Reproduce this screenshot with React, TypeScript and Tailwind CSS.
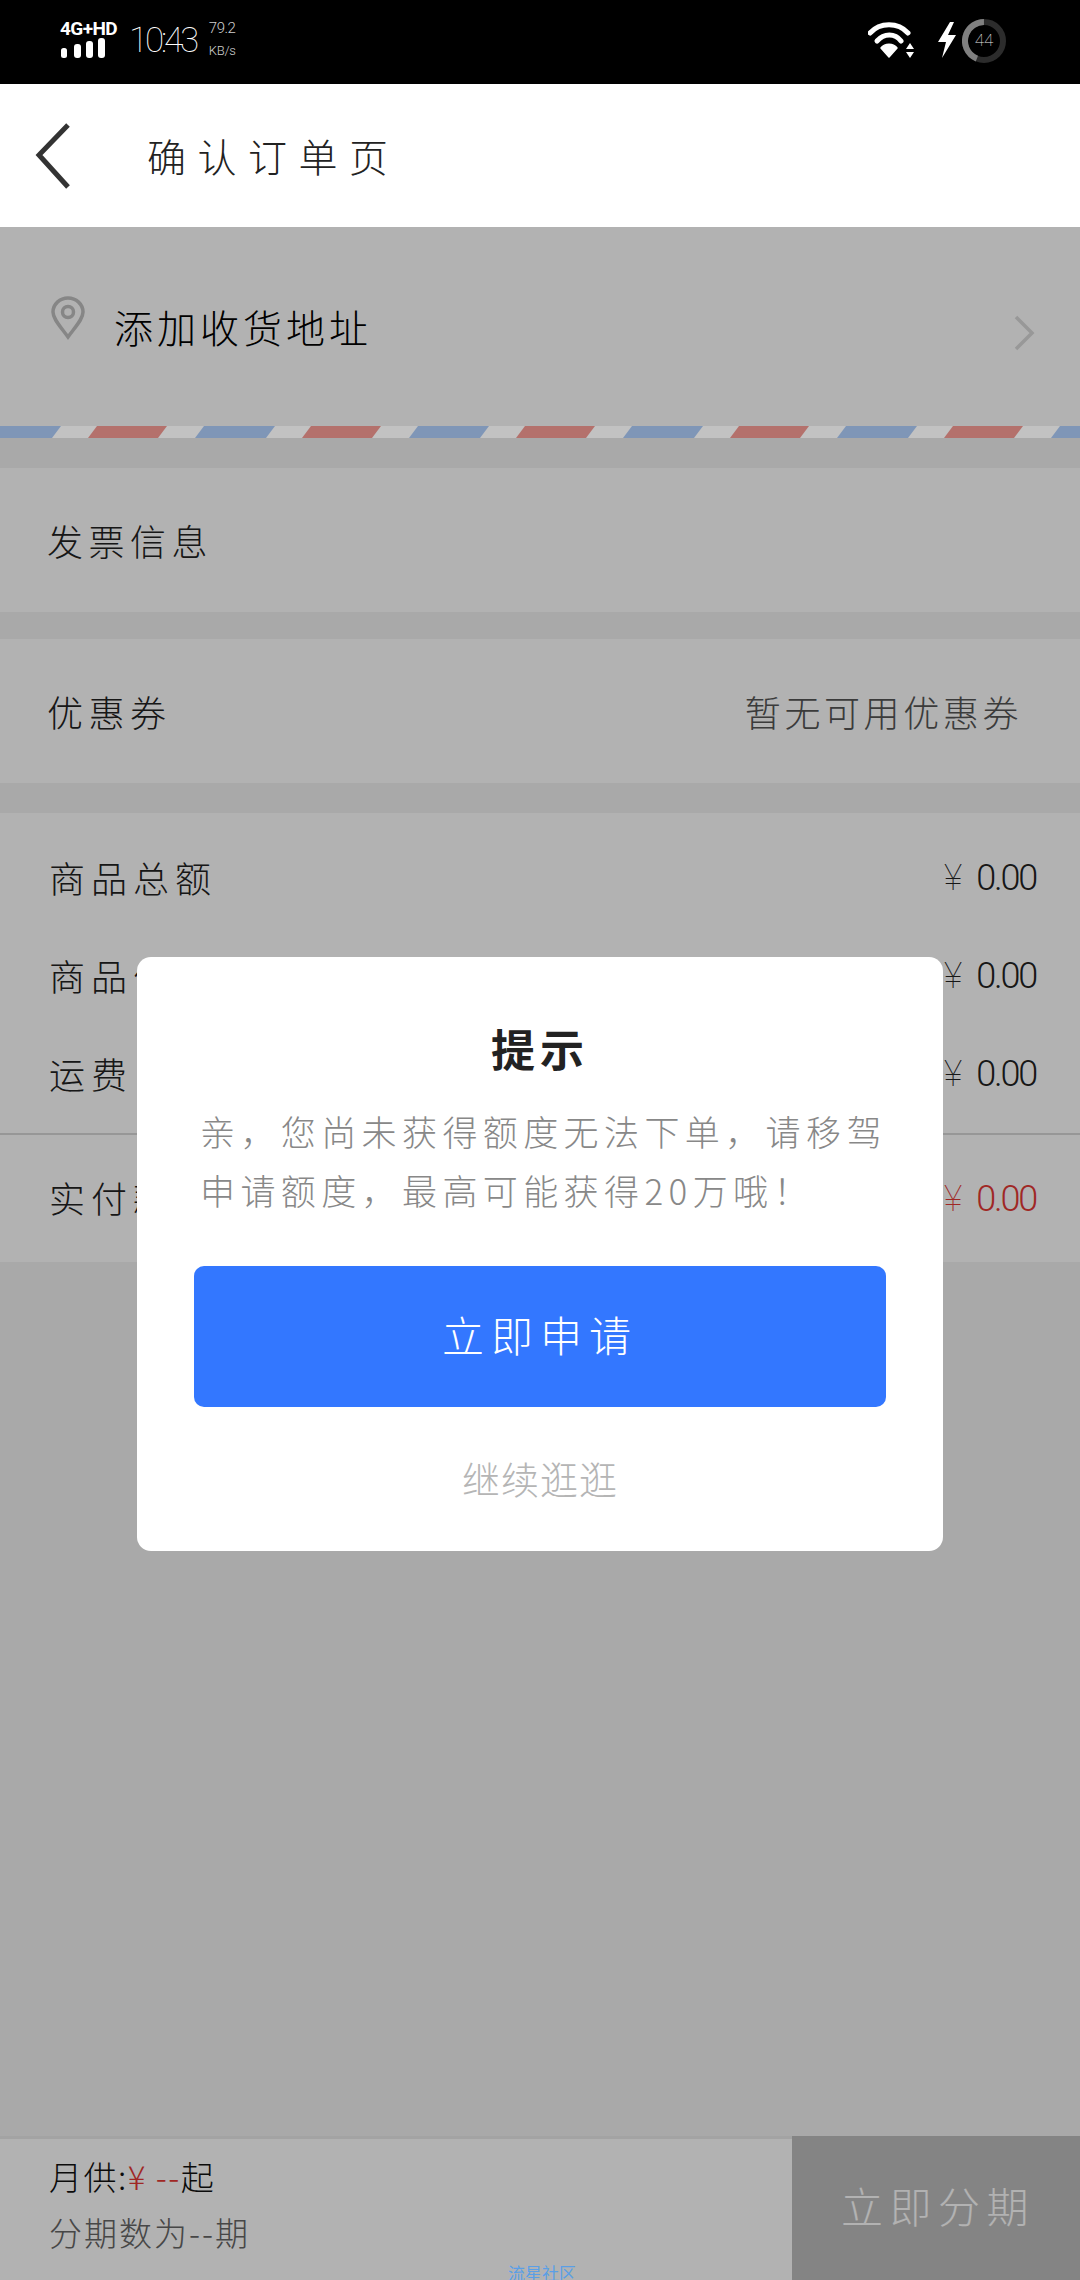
import React from "react";

const hand = "font-['Noto_Sans_CJK_SC','Noto_Sans',sans-serif]";
const num = "font-['Roboto','Noto_Sans_CJK_SC',sans-serif]";

function StatusBar() {
  return (
    <div className={`h-[84px] bg-black text-white flex items-start ${num}`}>
      <div className="w-[60px] shrink-0" />
      <div className="w-[60px] mt-[18px] flex flex-col">
        <span className="text-[19px] leading-[22px] font-bold tracking-[-0.6px] whitespace-nowrap">4G+HD</span>
        <svg width="46" height="21" viewBox="0 0 46 21" className="-mt-[3px] block" fill="#fff">
          <rect x="1" y="11" width="6" height="10" rx="2.5" />
          <rect x="14" y="7" width="7" height="14" rx="3" />
          <rect x="26" y="4" width="7" height="17" rx="3" />
          <rect x="38" y="1" width="7" height="20" rx="3" />
        </svg>
      </div>
      <span className="ml-[9px] mt-[19px] text-[35px] leading-[44px] font-thin tracking-[-3.2px]">10:43</span>
      <div className="ml-[13px] mt-[17px] flex flex-col text-[#cfcfcf] font-light">
        <span className="text-[15px] leading-[22px] tracking-[-0.5px]">79.2</span>
        <span className="text-[13px] leading-[20px] mt-[2px] tracking-[-0.3px]">KB/s</span>
      </div>
      <div className="ml-auto mr-[74px] mt-[19px] flex items-start">
        <svg width="48" height="42" viewBox="0 0 48 42" fill="none" stroke="#fff" strokeWidth="5" strokeLinecap="round">
          <path d="M2 14 C12 3 30 3 40 14" />
          <path d="M9 22 C16 14 27 14 33 22" />
          <path d="M21 38 L13 29 C17 24 25 24 29 29 Z" fill="#fff" strokeWidth="1.5" strokeLinejoin="round" />
          <path d="M42 24 L46 30 H38 Z M38 33 H46 L42 39 Z" fill="#fff" stroke="none" />
        </svg>
        <svg width="20" height="36" viewBox="0 0 20 36" fill="#fff" className="ml-[21px] mt-[3px]">
          <path d="M13 0 L1 20 H9 L5 36 L19 13 H11 L17 0 Z" />
        </svg>
        <div className="relative w-[44px] h-[44px] ml-[5px]">
          <svg width="44" height="44" viewBox="0 0 44 44" fill="none" strokeWidth="6">
            <circle cx="22" cy="22" r="19" stroke="#2c2c2c" />
            <circle cx="22" cy="22" r="19" stroke="#808080" strokeDasharray="52 120" transform="rotate(-248 22 22)" />
          </svg>
          <span className="absolute inset-0 flex items-center justify-center text-[17px] font-thin text-[#e5e5e5]">44</span>
        </div>
      </div>
    </div>
  );
}

function Row({ label, right, className = "" }: { label: string; right?: string; className?: string }) {
  return (
    <div className={`h-[144px] bg-white flex items-center justify-between pl-[47px] pr-[58px] ${className}`}>
      <span className="text-[36px] text-[#222] font-light tracking-[5.5px]">{label}</span>
      {right && <span className="text-[36px] text-[#555] font-light tracking-[3.6px]">{right}</span>}
    </div>
  );
}

function Price({ label, className = "", color = "text-[#222]" }: { label: string; className?: string; color?: string }) {
  return (
    <div className={`flex items-center justify-between pl-[49px] pr-[44px] ${className}`}>
      <span className="text-[36px] leading-[50px] -mt-[3px] text-[#222] font-light tracking-[6px]">{label}</span>
      <span className={`flex items-center gap-[14px] ${num} font-light ${color}`}>
        <span className="text-[36px] font-thin">¥</span>
        <span className="text-[36px] tracking-[-2.2px]">0.00</span>
      </span>
    </div>
  );
}

export default function App() {
  return (
    <div className={`relative h-[2280px] w-[1080px] overflow-hidden flex flex-col bg-[#f2f2f2] ${hand}`}>
      <StatusBar />
      <div className="h-[143px] bg-white flex items-center shrink-0 relative z-20">
        <svg width="44" height="70" viewBox="0 0 44 70" fill="none" stroke="#333" strokeWidth="5" className="ml-[32px]">
          <path d="M36 4 L7 34 L36 66" />
        </svg>
        <span className="ml-[71px] text-[39px] text-[#222] font-light tracking-[11.5px]">确认订单页</span>
      </div>

      <div className="h-[199px] bg-white flex items-center justify-between pl-[50px] pr-[44px] shrink-0">
        <div className="flex items-center">
          <svg width="36" height="44" viewBox="0 0 36 44" fill="none" stroke="#c0c0c0" strokeWidth="3.5" className="-mt-[18px]">
            <path d="M18 41 C10 30 3 23 3 16 A15 14 0 0 1 33 16 C33 23 26 30 18 41 Z" />
            <circle cx="18" cy="16" r="5.5" />
          </svg>
          <span className="ml-[28px] text-[39px] text-black font-light tracking-[4px]">添加收货地址</span>
        </div>
        <svg width="24" height="38" viewBox="0 0 24 38" fill="none" stroke="#dadada" strokeWidth="3.5" className="mt-[12px]">
          <path d="M4 3 L20 19 L4 35" />
        </svg>
      </div>
      <div className="h-[12px] bg-white shrink-0" />

      <Row label="发票信息" className="mt-[30px] shrink-0" />
      <Row label="优惠券" right="暂无可用优惠券" className="mt-[27px] shrink-0" />

      <div className="mt-[30px] bg-white shrink-0">
        <Price label="商品总额" className="h-[98px] mt-[16px]" />
        <Price label="商品优惠" className="h-[98px]" />
        <Price label="运费" className="h-[98px] mb-[10px]" />
        <div className="h-[2px] bg-[#d8d8d8]" />
        <Price label="实付款" className="h-[127px]" color="text-[#e53935]" />
      </div>

      <div className="mt-auto h-[144px] bg-white border-t-[3px] border-[#eaeaea] flex shrink-0">
        <div className="flex-1 pl-[49px] pt-[12px]">
          <p className="text-[33px] leading-[50px] text-[#111] font-light tracking-[1.5px]">
            月供:<span className="text-[#e53935]">¥ --</span>起
          </p>
          <p className="text-[33px] leading-[40px] mt-[11px] text-[#666] font-light tracking-[2px]">分期数为--期</p>
        </div>
        <div className="w-[288px] -mt-[3px] bg-[#bebebe] text-white flex items-center justify-center text-[42px] font-light tracking-[6.5px] pb-[8px] pl-[4px]">
          立即分期
        </div>
      </div>

      <div className="absolute inset-x-0 top-[227px] bottom-0 bg-black/30" />

      {/* strip sits above the dim layer so the light bands stay lighter */}
      <svg width="1080" height="12" className="absolute left-0 top-[426px]">
        <defs>
          <pattern id="airmail" x="80" y="0" width="214" height="12" patternUnits="userSpaceOnUse">
            <rect width="214" height="12" fill="#c2c2c2" />
            <polygon points="8,12 78,12 87,0 17,0" fill="#b4716c" />
            <polygon points="115,12 186,12 195,0 124,0" fill="#7f96b7" />
          </pattern>
        </defs>
        <rect width="1080" height="12" fill="url(#airmail)" />
      </svg>

      <div className="absolute left-[137px] top-[957px] w-[806px] h-[594px] bg-white rounded-[14px] flex flex-col items-center">
        <h2 className="mt-[61px] text-[44px] leading-[60px] font-bold text-[#222] tracking-[5px]">提示</h2>
        <p className="self-start ml-[63px] mt-[23px] text-[35px] leading-[59px] text-[#888] font-light tracking-[5.4px] whitespace-nowrap">
          亲，您尚未获得额度无法下单，请移驾
          <br />
          申请额度，最高可能获得20万哦！
        </p>
        <button className="mt-[47px] w-[692px] h-[141px] bg-[#3377ff] rounded-[10px] text-white text-[42px] font-light tracking-[7px] pb-[6px]">
          立即申请
        </button>
        <span className="mt-[43px] text-[38px] leading-[56px] text-[#b5b5b5] font-light tracking-[1px]">继续逛逛</span>
      </div>

      <span className="absolute left-[508px] top-[2263px] text-[17px] leading-[20px] text-[#5a9fe6] whitespace-nowrap">流星社区</span>
    </div>
  );
}
